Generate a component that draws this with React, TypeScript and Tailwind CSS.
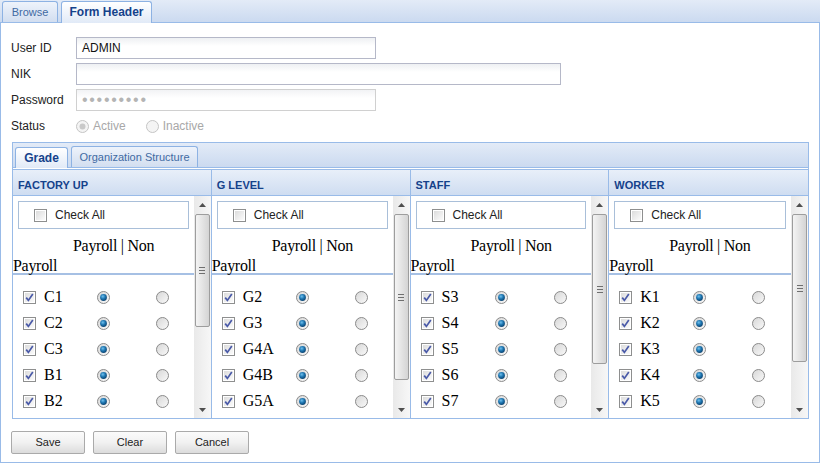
import React from 'react';

const columns = [
  { title: 'FACTORY UP', items: ['C1', 'C2', 'C3', 'B1', 'B2'], thumb: 113 },
  { title: 'G LEVEL', items: ['G2', 'G3', 'G4A', 'G4B', 'G5A'], thumb: 166 },
  { title: 'STAFF', items: ['S3', 'S4', 'S5', 'S6', 'S7'], thumb: 150 },
  { title: 'WORKER', items: ['K1', 'K2', 'K3', 'K4', 'K5'], thumb: 148 },
];

function CheckBox({ checked }: { checked?: boolean }) {
  return (
    <svg width="13" height="13" viewBox="0 0 13 13" className="shrink-0">
      <defs>
        <linearGradient id="cbg" x1="0" y1="0" x2="1" y2="1">
          <stop offset="0" stopColor="#dcdcdc" />
          <stop offset="1" stopColor="#fbfbfb" />
        </linearGradient>
      </defs>
      <rect x="0.5" y="0.5" width="12" height="12" fill="#fff" stroke="#8e8f8f" />
      <rect x="2" y="2" width="9" height="9" fill="url(#cbg)" />
      {checked && <path d="M3.2 6.6 L5.4 9.4 L9.8 3" fill="none" stroke="#4a5aa8" strokeWidth="1.7" />}
    </svg>
  );
}

function Radio({ checked, disabled }: { checked?: boolean; disabled?: boolean }) {
  const ring = disabled ? '#c4c4c4' : '#8b8b8b';
  return (
    <svg width="13" height="13" viewBox="0 0 13 13" className="shrink-0">
      <defs>
        <linearGradient id="rbg" x1="0" y1="0" x2="1" y2="1">
          <stop offset="0" stopColor="#d6d6d6" />
          <stop offset="1" stopColor="#fafafa" />
        </linearGradient>
        <radialGradient id="rdot" cx="0.4" cy="0.35" r="0.7">
          <stop offset="0" stopColor="#6fc0ee" />
          <stop offset="0.5" stopColor="#1d75b0" />
          <stop offset="1" stopColor="#0b3f6b" />
        </radialGradient>
      </defs>
      <circle cx="6.5" cy="6.5" r="6" fill={disabled ? '#f4f4f4' : 'url(#rbg)'} stroke={ring} />
      {checked && (disabled
        ? <circle cx="6.5" cy="6.5" r="3" fill="#c9c9c9" />
        : <circle cx="6.5" cy="6.5" r="3.4" fill="url(#rdot)" />)}
    </svg>
  );
}

function Arrow({ up }: { up?: boolean }) {
  return (
    <div className="h-[17px] flex items-center justify-center">
      <svg width="7" height="4" viewBox="0 0 7 4">
        <path d={up ? 'M0 4 L3.5 0 L7 4 Z' : 'M0 0 L3.5 4 L7 0 Z'} fill="#4f4f4f" />
      </svg>
    </div>
  );
}

function ScrollBar({ thumb }: { thumb: number }) {
  return (
    <div className="w-[17px] flex flex-col bg-gradient-to-r from-[#e9e9e9] to-[#f7f7f7]">
      <Arrow up />
      <div className="flex-1 pt-[1px] px-[1px]">
        <div
          className="rounded-[2px] border border-[#9d9d9d] bg-gradient-to-r from-[#f4f4f4] to-[#d4d4d4] flex flex-col items-center justify-center gap-[2px]"
          style={{ height: thumb }}
        >
          <div className="w-[6px] h-px bg-[#6f6f6f]" />
          <div className="w-[6px] h-px bg-[#6f6f6f]" />
          <div className="w-[6px] h-px bg-[#6f6f6f]" />
        </div>
      </div>
      <Arrow />
    </div>
  );
}

function Field({ label, children }: { label: string; children: React.ReactNode }) {
  return (
    <div className="flex items-center h-[26px]">
      <div className="w-[65px] text-[12px] text-[#222]">{label}</div>
      {children}
    </div>
  );
}

export default function App() {
  return (
    <div className="w-[820px] h-[465px] bg-white overflow-hidden font-['Liberation_Sans',Arial,sans-serif]">
      {/* outer tabs */}
      <div className="h-[23px] flex items-end gap-[3px] pl-[2px] border-b border-[#99bbe8] bg-gradient-to-b from-[#e3ebf7] to-[#cbdaf0]">
        <div className="h-[21px] w-[56px] text-center rounded-t-[3px] border border-b-0 border-[#8db2e3] bg-gradient-to-b from-[#eef3fb] to-[#d2def0] text-[#416aa3] text-[11px] leading-[20px]">
          Browse
        </div>
        <div className="h-[22px] w-[91px] text-center rounded-t-[3px] border border-b-0 border-[#8db2e3] bg-gradient-to-b from-white to-[#e1eaf7] text-[#15428b] text-[12px] font-bold leading-[21px] -mb-px">
          Form Header
        </div>
      </div>

      <div className="h-[440px] border-x border-b border-[#99bbe8]">
        {/* form */}
        <div className="pt-[12px] pl-[10px] flex flex-col">
          <Field label="User ID">
            <div className="w-[300px] h-[22px] border border-[#b5b8c8] bg-gradient-to-b from-[#eef0f3] to-white to-40% pl-[5px] text-[12px] leading-[20px] text-[#111]">
              ADMIN
            </div>
          </Field>
          <Field label="NIK">
            <div className="w-[485px] h-[22px] border border-[#b5b8c8] bg-gradient-to-b from-[#eef0f3] to-white to-40%" />
          </Field>
          <Field label="Password">
            <div className="w-[300px] h-[22px] border border-[#d0d0d0] bg-gradient-to-b from-[#f2f3f5] to-white to-40% pl-[5px] text-[16px] leading-[20px] tracking-[1.7px] text-[#b4b4b4]">
              •••••••••
            </div>
          </Field>
          <div className="flex items-center h-[26px]">
            <div className="w-[65px] text-[12px] text-[#222]">Status</div>
            <div className="flex items-center gap-[4px] text-[12px] text-[#a8a8a8]">
              <Radio checked disabled />
              <span>Active</span>
            </div>
            <div className="flex items-center gap-[4px] ml-[20px] text-[12px] text-[#a8a8a8]">
              <Radio disabled />
              <span>Inactive</span>
            </div>
          </div>
        </div>

        {/* inner tab panel */}
        <div className="ml-[11px] mt-[3px] w-[797px] border border-[#99bbe8]">
          <div className="h-[25px] flex items-end gap-[3px] pl-[2px] border-b border-[#99bbe8] bg-gradient-to-b from-[#e3ebf7] to-[#cbdaf0]">
            <div className="h-[21px] w-[53px] text-center rounded-t-[3px] border border-b-0 border-[#8db2e3] bg-gradient-to-b from-white to-[#e1eaf7] text-[#15428b] text-[12px] font-bold leading-[20px] -mb-px">
              Grade
            </div>
            <div className="h-[21px] w-[127px] text-center rounded-t-[3px] border border-b-0 border-[#8db2e3] bg-gradient-to-b from-[#eef3fb] to-[#d2def0] text-[#416aa3] text-[11px] leading-[20px]">
              Organization Structure
            </div>
          </div>

          <div className="grid grid-cols-4 mt-[1px]">
            {columns.map((col, ci) => (
              <div key={col.title} className={ci < 3 ? 'border-r border-[#99bbe8]' : ''}>
                <div className="h-[27px] border-y border-[#99bbe8] bg-gradient-to-b from-[#e8eff9] to-[#cfddf1] pl-[5px] pt-[7px] text-[11px] font-bold text-[#15428b]">
                  {col.title}
                </div>
                <div className="h-[222px] flex">
                  <div className="flex-1 overflow-hidden pt-[5px]">
                    <div className="mx-[5px] h-[28px] border border-[#a9bfd9] flex items-center pl-[15px] gap-[8px] text-[12px] text-[#222]">
                      <CheckBox />
                      <span>Check All</span>
                    </div>
                    <div className="mt-[7px] h-[37px] font-['Liberation_Serif',serif] text-[16px] leading-[20px] tracking-[-0.3px] text-black">
                      <div className="pl-[60px]">Payroll | Non</div>
                      <div>Payroll</div>
                    </div>
                    <div className="h-[2px] bg-[#a6c0e4]" />
                    <div className="pt-[9px]">
                      {col.items.map((it) => (
                        <div key={it} className="h-[26px] flex items-center pl-[10px]">
                          <CheckBox checked />
                          <span className="w-[53px] ml-[8px] font-['Liberation_Serif',serif] text-[16px] text-black">{it}</span>
                          <Radio checked />
                          <span className="ml-[46px]">
                            <Radio />
                          </span>
                        </div>
                      ))}
                    </div>
                  </div>
                  <ScrollBar thumb={col.thumb} />
                </div>
              </div>
            ))}
          </div>
        </div>

        {/* buttons */}
        <div className="flex gap-[8px] ml-[10px] mt-[12px]">
          {['Save', 'Clear', 'Cancel'].map((b) => (
            <div
              key={b}
              className="w-[74px] h-[23px] rounded-[2px] border border-[#aaaaaa] bg-gradient-to-b from-[#fbfbfb] via-[#f1f1f1] to-[#dcdcdc] flex items-center justify-center text-[11px] text-[#222]"
            >
              {b}
            </div>
          ))}
        </div>
      </div>
    </div>
  );
}
